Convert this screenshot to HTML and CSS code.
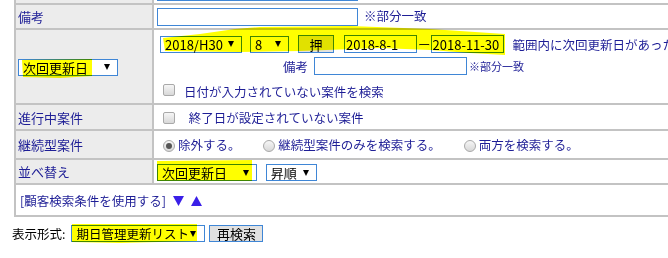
FILE: index.html
```html
<!DOCTYPE html>
<html lang="ja">
<head>
    <meta charset="UTF-8">
    <title>検索条件</title>
    <link rel="stylesheet" href="styles.css">
</head>
<body>
<div class="screen">
    <div class="page">
        <table class="search">
            <tr class="row-top">
                <th></th>
                <td><input type="text" class="txt w201"></td>
            </tr>
            <tr class="row-memo">
                <th>備考</th>
                <td><input type="text" class="txt w201"><span class="hint">※部分一致</span></td>
            </tr>
            <tr class="row-date">
                <th><span class="sel w100">次回更新日</span></th>
                <td>
                    <div class="range">
                        <div class="line">
                            <span class="sel w82">2018/H30</span>
                            <span class="sel w39">8</span>
                            <button class="btn push">押</button>
                            <input type="text" class="txt w73" value="2018-8-1">
                            <span class="dash">ー</span>
                            <input type="text" class="txt w73" value="2018-11-30">
                            <span class="note">範囲内に次回更新日があった案件を検索</span>
                        </div>
                        <div class="line memo">
                            <span class="memo-label">備考</span>
                            <input type="text" class="txt w153">
                            <small>※部分一致</small>
                        </div>
                        <label class="line opt"><input type="checkbox" class="check">日付が入力されていない案件を検索</label>
                    </div>
                </td>
            </tr>
            <tr class="row-running">
                <th>進行中案件</th>
                <td><label class="opt"><input type="checkbox" class="check">&nbsp;終了日が設定されていない案件</label></td>
            </tr>
            <tr class="row-cont">
                <th>継続型案件</th>
                <td>
                    <label class="opt radio-opt"><input type="radio" name="cont" class="radio" checked>除外する。</label>
                    <label class="opt radio-opt"><input type="radio" name="cont" class="radio">継続型案件のみを検索する。</label>
                    <label class="opt radio-opt"><input type="radio" name="cont" class="radio">両方を検索する。</label>
                </td>
            </tr>
            <tr class="row-sort">
                <th>並べ替え</th>
                <td>
                    <span class="sel w100">次回更新日</span>
                    <span class="sel w51">昇順</span>
                </td>
            </tr>
            <tr class="row-link">
                <td colspan="2">
                    <a class="toggle">[顧客検索条件を使用する]</a>
                    <svg class="tri" width="11" height="10" viewBox="0 0 11 10"><polygon points="0,0 11,0 5.5,10"/></svg>
                    <svg class="tri" width="11" height="10" viewBox="0 0 11 10"><polygon points="0,10 11,10 5.5,0"/></svg>
                </td>
            </tr>
        </table>

        <div class="footer">
            <span class="footer-label">表示形式:</span>
            <span class="sel w134">期日管理更新リスト</span>
            <button class="btn research">再検索</button>
        </div>
    </div>

    <!-- highlighter marks drawn on top of the form -->
    <svg class="marker" width="668" height="258" viewBox="0 0 668 258">
        <polygon points="163,38 200,34 235,29 260,27 350,26 430,29 505,34 505,55 470,53 430,50 380,48 300,51 240,52 165,51"/>
        <polygon points="22,60 92,59 92,76 60,78 23,77"/>
        <polygon points="157,161 252,160 252,181 157,181"/>
        <polygon points="72,224 197,224 197,241 120,243 72,242"/>
    </svg>
</div>
</body>
</html>
```

FILE: styles.css
```css
html, body {
    margin: 0;
    padding: 0;
    overflow: hidden;
}

body {
    font-family: "Noto Sans CJK JP", sans-serif;
    font-size: 12.5px;
    color: #1e1e96;
    background: #fff;
}

.screen {
    position: relative;
    width: 668px;
    height: 258px;
    overflow: hidden;
}

.page {
    margin-top: -22px;
    padding-left: 12px;
}

/* search table */
.search {
    border-collapse: separate;
    border-spacing: 0;
    border: 1px solid #c3c3c3;
    margin-left: 2px;
    width: 760px;
}

.search th,
.search td {
    border: 1px solid #c3c3c3;
    padding: 0 3px;
    text-align: left;
    font-weight: normal;
    vertical-align: middle;
    white-space: nowrap;
    line-height: 17px;
}

.search th {
    background: #ececec;
    width: 132px;
    padding: 0 2px;
    font-size: 13px;
}

.row-top td { height: 23px; }
.row-memo td { height: 23px; }
.row-date td { height: 72px; }
.row-running td { height: 24px; }
.row-cont td { height: 27px; }
.row-sort td { height: 23px; }
.row-link td { height: 30px; background: #fff; }

/* form controls */
.txt {
    box-sizing: border-box;
    height: 18px;
    border: 1px solid #3f86d6;
    padding: 0 1px;
    margin: 0;
    font-family: "Noto Sans CJK JP", sans-serif;
    font-size: 13px;
    color: #000;
    vertical-align: middle;
    outline: none;
}

.sel {
    display: inline-flex;
    align-items: center;
    justify-content: space-between;
    box-sizing: border-box;
    height: 17px;
    border: 1px solid #3f86d6;
    background: #fff;
    color: #000;
    font-size: 13px;
    padding: 0 7px 0 4px;
    vertical-align: middle;
    line-height: 15px;
    white-space: nowrap;
}

.sel::after {
    content: "";
    flex: none;
    border-left: 3.5px solid transparent;
    border-right: 3.5px solid transparent;
    border-top: 6px solid #000;
}

.btn {
    box-sizing: border-box;
    height: 18px;
    border: 1px solid #3f86d6;
    background: #e1e1e1;
    color: #000;
    font-family: "Noto Sans CJK JP", sans-serif;
    font-size: 13px;
    padding: 0;
    margin: 0;
    vertical-align: middle;
    line-height: 15px;
}

.check,
.radio {
    appearance: none;
    -webkit-appearance: none;
    box-sizing: border-box;
    width: 12px;
    height: 12px;
    margin: 0;
    border: 1px solid #a9a9a9;
    background: linear-gradient(#f6f6f6, #d8d8d8);
    vertical-align: middle;
    position: relative;
    top: -1px;
}

.check {
    border-radius: 2px;
}

.radio {
    border-radius: 50%;
}

.radio:checked::after {
    content: "";
    position: absolute;
    left: 2px;
    top: 2px;
    width: 6px;
    height: 6px;
    border-radius: 50%;
    background: #555;
}

/* widths */
.w39 { width: 39px; }
.w51 { width: 51px; }
.w73 { width: 73px; }
.w82 { width: 82px; }
.w100 { width: 100px; }
.w134 { width: 134px; }
.w153 { width: 153px; }
.w201 { width: 201px; }

.hint {
    margin-left: 6px;
}

/* date range cell */
.range {
    display: flex;
    flex-direction: column;
    padding: 5px 0 3px 3px;
}

.line {
    display: flex;
    align-items: center;
    height: 18px;
}

.line + .line {
    margin-top: 4px;
}

.line .sel { margin-right: 8px; }
.line .w39 { margin-right: 9px; }
.push { width: 36px; height: 18px; margin-right: 10px; }
.dash { margin: 0 0 0 1px; color: #1e1e96; }
.note { margin-left: 9px; }

.memo {
    padding-left: 123px;
}

.memo-label {
    margin-right: 6px;
}

.memo small {
    margin-left: 2px;
    font-size: 11px;
}

.opt {
    cursor: pointer;
}

.range .opt {
    margin-top: 7px;
}

.range .opt .check {
    margin: 0 9px 0 3px;
}

.row-running .check {
    margin: 0 11px 0 6px;
}

.radio-opt .radio {
    margin: 0 3px 0 6px;
}

.radio-opt + .radio-opt {
    margin-left: 14px;
}

.row-sort .sel { margin-right: 6px; }

.toggle {
    color: #1e1e96;
    margin-left: 1px;
}

.tri {
    vertical-align: middle;
    position: relative;
    top: -1px;
    margin-left: 4px;
}

.tri polygon {
    fill: #3a1fe8;
}

/* bottom bar */
.footer {
    display: flex;
    align-items: center;
    margin-top: 7px;
    color: #000;
}

.footer-label {
    font-size: 12.5px;
    margin-right: 6px;
}

.footer .sel {
    margin-right: 4px;
    font-size: 12.5px;
    padding-right: 8px;
}

.research {
    width: 54px;
    height: 17px;
}

/* highlighter */
.marker {
    position: absolute;
    left: 0;
    top: 0;
    mix-blend-mode: multiply;
    pointer-events: none;
}

.marker polygon {
    fill: #ffff00;
}
```
